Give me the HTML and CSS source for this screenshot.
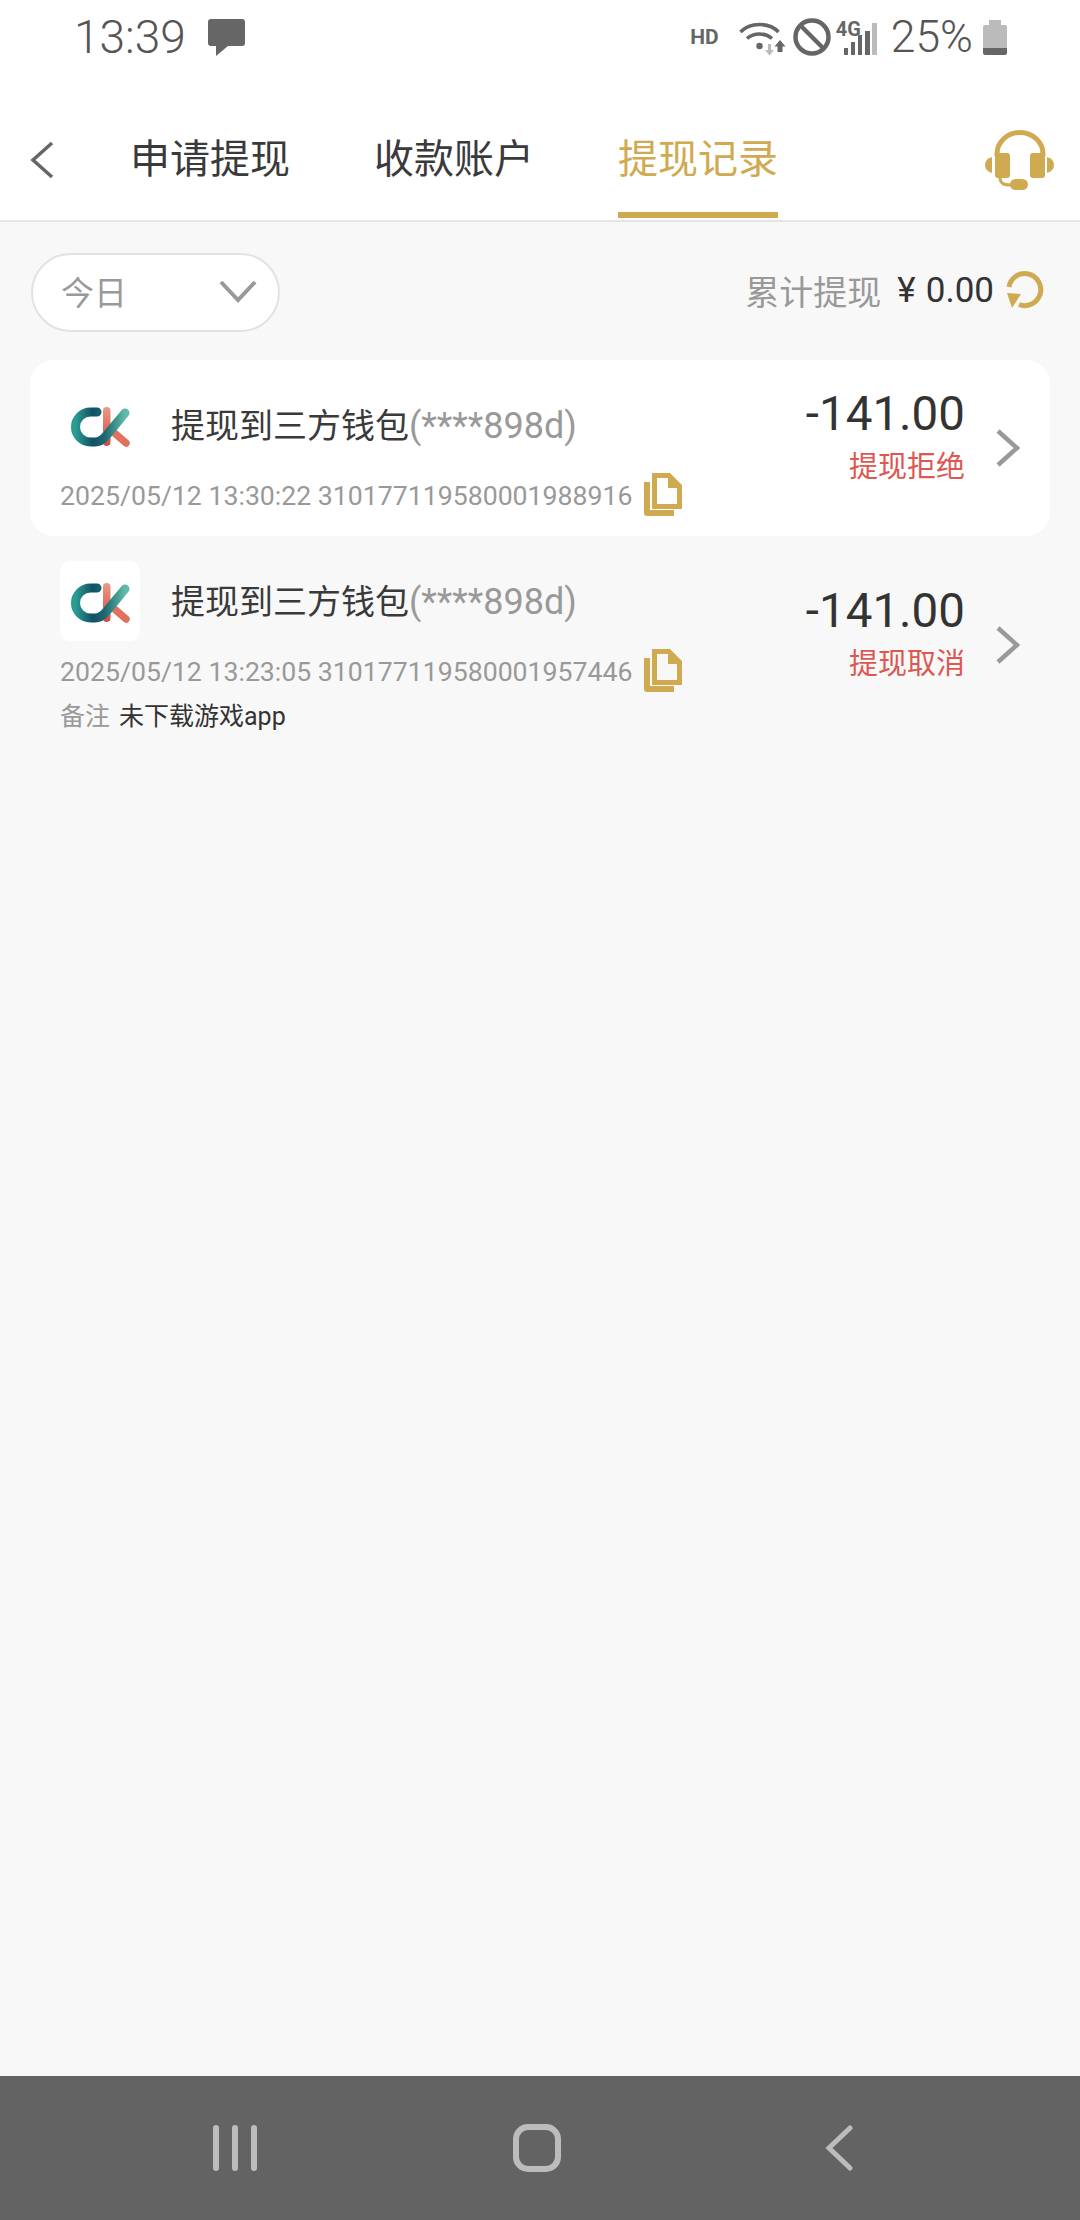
FILE: index.html
```html
<!DOCTYPE html>
<html lang="zh">
<head>
    <meta charset="UTF-8">
    <meta name="viewport" content="width=device-width, initial-scale=1.0">
    <title>提现记录</title>
    <link rel="stylesheet" href="styles.css">
</head>
<body>

<svg class="defs" width="0" height="0">
    <defs>
        <linearGradient id="ckTeal" x1="0" y1="0" x2="1" y2="0">
            <stop offset="0" stop-color="#2a9c90"/>
            <stop offset="0.35" stop-color="#125064"/>
            <stop offset="0.6" stop-color="#1d6a74"/>
            <stop offset="1" stop-color="#62bba6"/>
        </linearGradient>
        <linearGradient id="ckRed" x1="0" y1="0" x2="0" y2="1">
            <stop offset="0" stop-color="#ea9a86"/>
            <stop offset="1" stop-color="#d24a40"/>
        </linearGradient>
        <symbol id="ck" viewBox="0 0 80 80">
            <rect x="43" y="22" width="7.500" height="39" rx="3.750" fill="url(#ckRed)"/>
            <path d="M51 45L66 58" fill="none" stroke="#e2705f" stroke-width="7.500" stroke-linecap="round"/>
            <path d="M37 27H30.500A15 15 0 0 0 30.500 57H35C40 57 43 54.500 46 51L65 28" fill="none" stroke="url(#ckTeal)" stroke-width="9" stroke-linecap="round" stroke-linejoin="round"/>
        </symbol>
        <symbol id="copy" viewBox="0 0 38 43">
            <path d="M0 9H6V37H30V43H3Q0 43 0 40Z"/>
            <path fill-rule="evenodd" d="M8 0H26L38 12V36H8ZM13 5V31H33V15H24V5Z"/>
        </symbol>
        <symbol id="arrow" viewBox="0 0 24 38">
            <path d="M2 2L21 19L2 36" fill="none" stroke="#999" stroke-width="4.500"/>
        </symbol>
    </defs>
</svg>

<div class="page">
    <header class="top">
        <div class="status">
            <span class="time">13:39</span>
            <svg class="msg-icon" width="37" height="37" viewBox="0 0 37 37">
                <path d="M3 0H34Q37 0 37 3V24Q37 27 34 27H20L8 37V27H3Q0 27 0 24V3Q0 0 3 0Z" fill="#666"/>
            </svg>
            <div class="status-right">
                <span class="hd">HD</span>
                <svg class="wifi" width="47" height="36" viewBox="0 0 47 36">
                    <g fill="none" stroke="#666" stroke-width="3.600">
                        <path d="M1.500 12C11 2 30 2 39.500 12"/>
                        <path d="M8 18.500C15 12.500 26 12.500 33 18.500"/>
                    </g>
                    <circle cx="20.500" cy="26" r="3.200" fill="#666"/>
                    <path d="M29 24H32V30H35L30.500 35.500L26 30H29Z" fill="#bbb"/>
                    <path d="M41 20L46.500 26.500H43.500V32H38.500V26.500H35.500Z" fill="#666"/>
                </svg>
                <svg class="ban" width="38" height="38" viewBox="0 0 38 38">
                    <circle cx="19" cy="19" r="16.500" fill="none" stroke="#666" stroke-width="4.500"/>
                    <path d="M7 7L31 31" stroke="#666" stroke-width="4.500"/>
                </svg>
                <div class="net">
                    <span class="net-label">4G</span>
                    <div class="bars">
                        <i class="bar bar-1"></i>
                        <i class="bar bar-2"></i>
                        <i class="bar bar-3"></i>
                        <i class="bar bar-4"></i>
                        <i class="bar bar-5"></i>
                    </div>
                </div>
                <span class="percent">25%</span>
                <div class="battery">
                    <i class="battery-nub"></i>
                    <i class="battery-body"></i>
                </div>
            </div>
        </div>
        <nav class="tabbar">
            <svg class="back" width="24" height="38" viewBox="0 0 24 38">
                <path d="M22 2L3 19L22 36" fill="none" stroke="#666" stroke-width="3.500"/>
            </svg>
            <div class="tabs">
                <a class="tab">申请提现</a>
                <a class="tab">收款账户</a>
                <a class="tab active">提现记录</a>
            </div>
            <svg class="headset" width="71" height="60" viewBox="0 0 71 60">
                <g fill="#d0aa50">
                    <rect x="11" y="23" width="15" height="25" rx="3"/>
                    <rect x="46" y="23" width="15" height="25" rx="3"/>
                    <path d="M8 27V43Q1 41 1 35Q1 29 8 27Z"/>
                    <path d="M63 27V43Q70 41 70 35Q70 29 63 27Z"/>
                    <rect x="26" y="49" width="18" height="11" rx="5.500"/>
                </g>
                <g fill="none" stroke="#d0aa50">
                    <path d="M13 26V24A23 21.500 0 0 1 59 24V26" stroke-width="5"/>
                    <path d="M16 47C16 54 20 55 27 55" stroke-width="3"/>
                </g>
            </svg>
        </nav>
    </header>

    <main class="content">
        <div class="filter-row">
            <div class="filter">
                <span>今日</span>
                <svg width="38" height="23" viewBox="0 0 38 23">
                    <path d="M2 2L19 20L36 2" fill="none" stroke="#999" stroke-width="4"/>
                </svg>
            </div>
            <div class="total">
                <span class="total-label">累计提现</span>
                <span class="total-yen">¥</span>
                <span class="total-value">0.00</span>
                <svg width="38" height="38" viewBox="0 0 38 38">
                    <path d="M3 16A16 16 0 1 1 13 33.500" fill="none" stroke="#d0aa50" stroke-width="5"/>
                    <path d="M1 22L15 23L6 37Z" fill="#d0aa50"/>
                </svg>
            </div>
        </div>

        <div class="record record-white">
            <div class="record-main">
                <div class="record-head">
                    <div class="logo"><svg width="80" height="80"><use href="#ck"/></svg></div>
                    <div class="record-title">提现到三方钱包<span class="account">(****898d)</span></div>
                </div>
                <div class="record-meta">
                    <span class="record-no">2025/05/12 13:30:22 310177119580001988916</span>
                    <svg class="copy" width="38" height="43"><use href="#copy"/></svg>
                </div>
            </div>
            <div class="record-side">
                <div class="amount">-141.00</div>
                <div class="state">提现拒绝</div>
            </div>
            <svg class="more" width="24" height="38"><use href="#arrow"/></svg>
        </div>

        <div class="record">
            <div class="record-main">
                <div class="record-head">
                    <div class="logo"><svg width="80" height="80"><use href="#ck"/></svg></div>
                    <div class="record-title">提现到三方钱包<span class="account">(****898d)</span></div>
                </div>
                <div class="record-meta">
                    <span class="record-no">2025/05/12 13:23:05 310177119580001957446</span>
                    <svg class="copy" width="38" height="43"><use href="#copy"/></svg>
                </div>
                <div class="remark"><span class="remark-label">备注</span>未下载游戏app</div>
            </div>
            <div class="record-side">
                <div class="amount">-141.00</div>
                <div class="state">提现取消</div>
            </div>
            <svg class="more" width="24" height="38"><use href="#arrow"/></svg>
        </div>
    </main>

    <footer class="navbar">
        <div class="nav-slot">
            <div class="nav-lines"><i></i><i></i><i></i></div>
        </div>
        <div class="nav-slot"><div class="nav-home"></div></div>
        <div class="nav-slot">
            <svg width="28" height="46" viewBox="0 0 28 46">
                <path d="M25 3L4 23L25 43" fill="none" stroke="#bcbcbc" stroke-width="5" stroke-linecap="round"/>
            </svg>
        </div>
    </footer>
</div>

</body>
</html>
```

FILE: styles.css
```css
body {
    margin: 0;
    font-family: Roboto, "Noto Sans CJK SC", sans-serif;
    color: #333;
    background-color: #f8f8f8;
}
.defs {
    display: block;
    height: 0;
}
.page {
    width: 1080px;
    height: 2220px;
    display: flex;
    flex-direction: column;
}

/* top */
.top {
    height: 220px;
    background-color: #fff;
    border-bottom: 2px solid #e5e5e5;
}
.status {
    height: 74px;
    display: flex;
    align-items: center;
    padding: 0 73px 0 74px;
}
.time {
    font-size: 46px;
    font-weight: 300;
    color: #555;
}
.msg-icon {
    margin-left: 22px;
}
.status-right {
    margin-left: auto;
    display: flex;
    align-items: center;
}
.hd {
    font-size: 21px;
    font-weight: 700;
    color: #666;
    margin-right: 20px;
}
.wifi {
    margin-right: 7px;
    margin-top: 1px;
}
.ban {
    margin-right: 5px;
}
.net {
    position: relative;
    width: 41px;
    height: 36px;
    margin-right: 14px;
}
.net-label {
    position: absolute;
    left: 0;
    top: -2px;
    font-size: 20px;
    font-weight: 700;
    color: #666;
}
.bars {
    position: absolute;
    left: 8px;
    bottom: 0;
    display: flex;
    align-items: flex-end;
    gap: 2.6px;
}
.bar {
    width: 4.5px;
    background-color: #666;
}
.bar-1 { height: 7px; }
.bar-2 { height: 13px; }
.bar-3 { height: 20px; }
.bar-4 { height: 24px; }
.bar-5 { height: 32px; background-color: #bbb; }
.percent {
    font-size: 44.5px;
    font-weight: 300;
    color: #555;
    margin-right: 10px;
}
.battery {
    width: 24px;
    display: flex;
    flex-direction: column;
    align-items: center;
}
.battery-nub {
    width: 12px;
    height: 5px;
    background-color: #bbb;
}
.battery-body {
    width: 24px;
    height: 30px;
    border-radius: 2px;
    background: linear-gradient(#bbb 0 23px, #666 23px);
}

.tabbar {
    height: 144px;
    box-sizing: border-box;
    display: flex;
    align-items: center;
    padding: 28px 25px 0 30px;
}
.back {
    flex: none;
}
.tabs {
    align-self: flex-end;
    display: flex;
    gap: 84px;
    margin-left: 76px;
}
.tab {
    width: 160px;
    height: 108px;
    padding-top: 21px;
    box-sizing: border-box;
    line-height: 58px;
    text-align: center;
    font-size: 40px;
    color: #3a3a3a;
    border-bottom: 6px solid transparent;
}
.tab.active {
    color: #d0aa50;
    border-bottom-color: #d0aa50;
}
.headset {
    margin-left: auto;
}

/* list */
.content {
    flex: 1;
    padding: 0 30px;
}
.filter-row {
    height: 138px;
    box-sizing: border-box;
    padding-top: 31px;
    display: flex;
    align-items: flex-start;
    justify-content: space-between;
}
.filter {
    width: 249px;
    height: 79px;
    box-sizing: border-box;
    margin-left: 1px;
    padding: 0 21px 3px 28px;
    display: flex;
    align-items: center;
    justify-content: space-between;
    background-color: #fff;
    border: 2px solid #e2e2e2;
    border-radius: 40px;
    font-size: 33px;
    color: #999;
}
.total {
    display: flex;
    align-items: center;
    height: 74px;
    padding-right: 6px;
}
.total-label {
    font-size: 34px;
    color: #999;
}
.total-yen {
    font-size: 35px;
    color: #333;
    margin-left: 16px;
    margin-right: 10px;
}
.total-value {
    font-size: 35px;
    color: #333;
}
.total svg {
    margin-left: 12px;
}

.record {
    display: flex;
    align-items: center;
    padding: 25px 30px 19px;
    border-radius: 24px;
}
.record-white {
    background-color: #fff;
    padding-bottom: 20px;
}
.record-main {
    width: 622px;
    align-self: flex-start;
}
.record-head {
    display: flex;
    align-items: center;
    gap: 31px;
}
.logo {
    width: 80px;
    height: 80px;
    background-color: #fff;
    border-radius: 10px;
}
.logo svg {
    display: block;
}
.record-title {
    font-size: 34px;
    color: #3a3a3a;
    line-height: 50px;
    padding-top: 2px;
}
.account {
    font-size: 36px;
    color: #999;
}
.record-meta {
    margin-top: 8px;
    height: 43px;
    display: flex;
    align-items: center;
    justify-content: space-between;
}
.record-no {
    font-size: 26.67px;
    color: #999;
    white-space: nowrap;
    padding-top: 3px;
}
.copy {
    fill: #d0aa50;
    flex: none;
}
.remark {
    height: 36px;
    line-height: 36px;
    margin-top: 7px;
    font-size: 25px;
    color: #333;
}
.remark-label {
    color: #999;
    margin-right: 9px;
}
.record-side {
    flex: 1;
    text-align: right;
    margin-bottom: 31px;
}
.amount {
    font-size: 47.5px;
    line-height: 56px;
    color: #333;
}
.state {
    font-size: 29px;
    line-height: 36px;
    margin-top: 7px;
    color: #dd5850;
}
.more {
    flex: none;
    margin-left: 31px;
    margin-bottom: 6px;
}

/* bottom */
.navbar {
    height: 144px;
    box-sizing: border-box;
    padding-left: 84px;
    display: grid;
    grid-template-columns: repeat(3, 302px);
    background-color: #636363;
}
.nav-slot {
    display: flex;
    align-items: center;
    justify-content: center;
}
.nav-lines {
    display: flex;
    gap: 13px;
}
.nav-lines i {
    width: 6px;
    height: 46px;
    border-radius: 3px;
    background-color: #bcbcbc;
}
.nav-home {
    width: 48px;
    height: 48px;
    box-sizing: border-box;
    border: 6px solid #bcbcbc;
    border-radius: 15px;
}
```
